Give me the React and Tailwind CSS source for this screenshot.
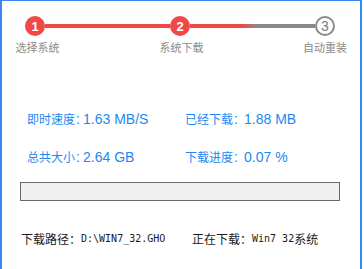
const cjk = { fontFamily: '"Noto Sans CJK SC", sans-serif' };
const sans = { fontFamily: '"Liberation Sans", "Noto Sans CJK SC", sans-serif' };
const mono = { fontFamily: '"DejaVu Sans Mono", "Liberation Mono", monospace' };

const Step = ({ n, label, done, shift = "" }) => (
  <div className="flex flex-col items-center w-[20px]">
    {done ? (
      <div
        className="w-[20px] h-[20px] rounded-full bg-[#f04747] text-white flex items-center justify-center text-[13px] font-bold leading-none"
        style={sans}
      >
        {n}
      </div>
    ) : (
      <div
        className="w-[20px] h-[20px] rounded-full border-2 border-[#8a8a8a] text-[#7a7a7a] flex items-center justify-center text-[14px] leading-none"
        style={sans}
      >
        {n}
      </div>
    )}
    <div className={`mt-[4px] whitespace-nowrap text-[11px] leading-[15px] text-[#8c8c8c] ${shift}`} style={cjk}>
      {label}
    </div>
  </div>
);

const Stat = ({ label, value, labelW }) => (
  <div className="flex items-center h-[20px] text-[#1e88f0]">
    <span className="flex items-center" style={{ width: labelW }}>
      <span className="text-[12px] leading-[20px]" style={cjk}>{label}</span>
      <span className="text-[14px] leading-[20px] ml-[1px]" style={sans}>:</span>
    </span>
    <span className="text-[14px] leading-[20px]" style={sans}>{value}</span>
  </div>
);

export default function App() {
  return (
    <div className="w-[364px] h-[269px] bg-white pr-[2px]">
      <div className="h-full border-l-2 border-t border-r-2 border-[#3d86ee] bg-white">
        {/* stepper */}
        <div className="flex items-start pl-[23px] pt-[15px]">
          <Step n="1" label="选择系统" done shift="ml-[5px]" />
          <div className="w-[125px] h-[4px] mt-[8px] bg-[#f04747]" />
          <Step n="2" label="系统下载" done shift="ml-[3px]" />
          <div className="w-[125px] h-[4px] mt-[8px] bg-[linear-gradient(to_right,#f04747_40%,#8a8a8a_55%)]" />
          <Step n="3" label="自动重装" />
        </div>

        {/* stats */}
        <div className="pl-[25px] mt-[54px] flex flex-col gap-[18px]">
          <div className="flex">
            <div className="w-[158px]">
              <Stat label="即时速度" value="1.63 MB/S" labelW="56px" />
            </div>
            <Stat label="已经下载" value="1.88 MB" labelW="59px" />
          </div>
          <div className="flex">
            <div className="w-[158px]">
              <Stat label="总共大小" value="2.64 GB" labelW="56px" />
            </div>
            <Stat label="下载进度" value="0.07 %" labelW="59px" />
          </div>
        </div>

        {/* progress */}
        <div className="ml-[18px] mt-[15px] w-[320px] h-[19px] border border-[#696969] bg-[#f0f0f0]" />

        {/* bottom info */}
        <div className="flex pl-[19px] mt-[30px] text-[#1a1a1a] leading-[16px] items-center">
          <div className="w-[171px] flex items-center whitespace-nowrap">
            <span className="text-[12px]" style={cjk}>下载路径：</span>
            <span className="text-[10px]" style={mono}>D:\WIN7_32.GHO</span>
          </div>
          <div className="flex items-center whitespace-nowrap">
            <span className="text-[12px]" style={cjk}>正在下载：</span>
            <span className="text-[10px]" style={mono}>Win7 32</span>
            <span className="text-[12px]" style={cjk}>系统</span>
          </div>
        </div>
      </div>
    </div>
  );
}
